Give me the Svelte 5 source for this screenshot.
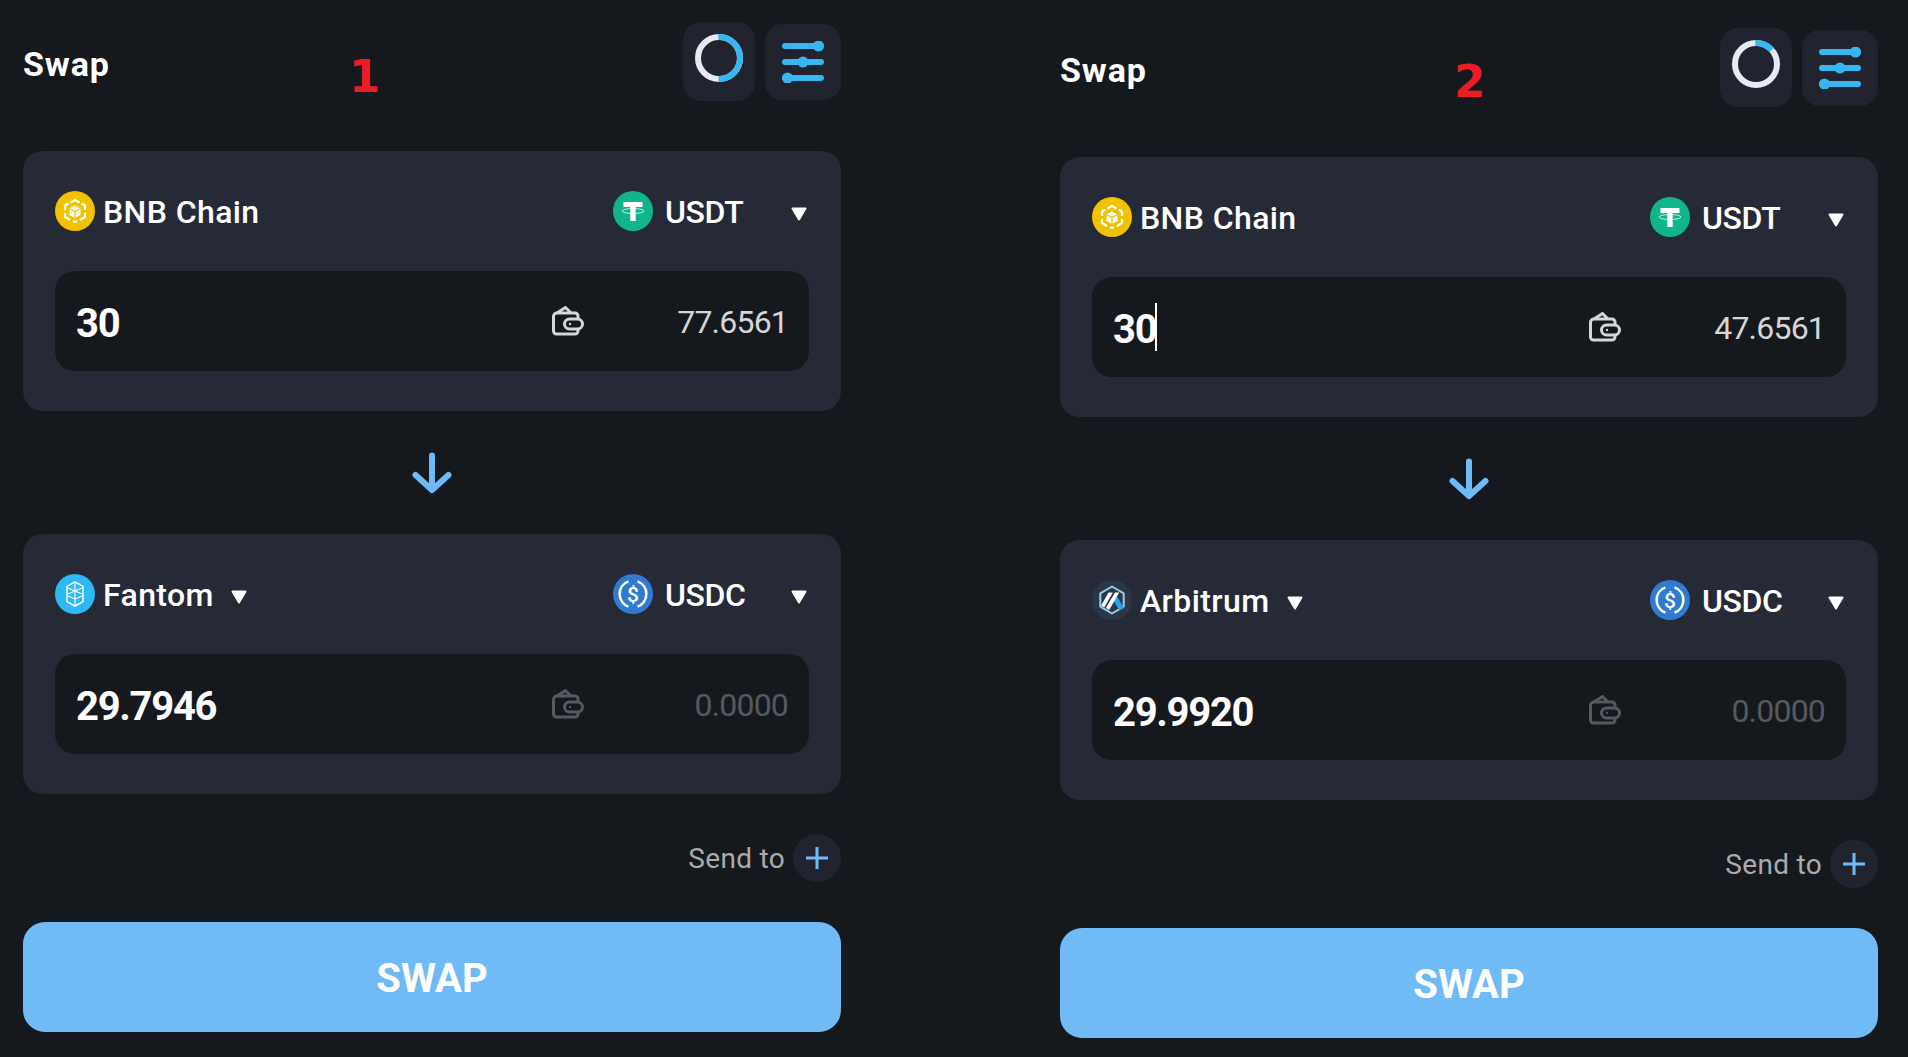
<script lang="ts">
	const panels = [
		{
			tag: '1',
			progress: 51,
			from: { value: '30', balance: '77.6561', cursor: false },
			chain: { name: 'Fantom', icon: 'fantom' },
			to: { value: '29.7946', balance: '0.0000' }
		},
		{
			tag: '2',
			progress: 14,
			from: { value: '30', balance: '47.6561', cursor: true },
			chain: { name: 'Arbitrum', icon: 'arbitrum' },
			to: { value: '29.9920', balance: '0.0000' }
		}
	];
</script>

{#snippet caret()}
	<svg class="caret" viewBox="0 0 16 14"><path d="M1.5 1.5h13L8 12.5z" fill="#fff" stroke="#fff" stroke-width="2" stroke-linejoin="round" /></svg>
{/snippet}

{#snippet logo(kind)}
	<svg class="logo" viewBox="0 0 40 40">
		{#if kind === 'bnb'}
			<circle cx="20" cy="20" r="20" fill="#f0c200" />
			<path d="M15.500 11.500L20 9l4.500 2.500M26.500 12.500l3.500 2V19M30 22v4l-5 3M22 30l-2 1-2-1M15 29l-5-3v-4M10 19v-4.500l3.500-2" fill="none" stroke="#fff" stroke-width="2.200" />
			<path d="M20 14.500l5.500 3V24L20 27l-5.500-3v-6.500z" fill="#fff" />
			<path d="M14.500 17.500l5.500 3 5.500-3M20 20.500V27" fill="none" stroke="#f0c200" stroke-width="1.300" />
		{:else if kind === 'usdt'}
			<circle cx="20" cy="20" r="20" fill="#10b68a" />
			<path d="M10.500 11h19v5h-6.800v14h-5.400V16h-6.800z" fill="#fff" />
			<ellipse cx="20" cy="20" rx="11" ry="2.500" fill="none" stroke="#fff" stroke-opacity="0.8" stroke-width="0.9" />
		{:else if kind === 'usdc'}
			<circle cx="20" cy="20" r="20" fill="#2f7bd2" />
			<path d="M15.500 7.400a13.400 13.400 0 0 0 0 25.200M24.500 7.400a13.400 13.400 0 0 1 0 25.200" fill="none" stroke="#fff" stroke-width="2.600" />
			<text x="20" y="27.500" text-anchor="middle" class="dollar">$</text>
		{:else if kind === 'fantom'}
			<circle cx="20" cy="20" r="20" fill="#2cb9f6" />
			<path d="M20 8l8 4.400v15.200L20 32l-8-4.400V12.400z" fill="none" stroke="#fff" stroke-width="1.500" stroke-linejoin="round" />
			<path d="M13 14l14 6M27 14l-14 6M20 9v22M13 22l7 3 7-3" fill="none" stroke="#fff" stroke-width="1.100" />
		{:else}
			<circle cx="20" cy="20" r="20" fill="#2b3648" />
			<path d="M20 6.500l11.700 6.800v13.400L20 33.500 8.300 26.700V13.300z" fill="#2b3648" stroke="#9ccbe8" stroke-width="2" stroke-linejoin="round" />
			<path d="M24 14.500l8 13.500-4.600 2.600-6.600-11z" fill="#28a0f0" />
			<path d="M16.500 12.500h4.300l-8.500 15-3.200-2zM23 12.500h4.200l-10 17.500-3.400-2z" fill="#fff" />
		{/if}
	</svg>
{/snippet}

{#snippet wallet()}
	<svg class="wallet" viewBox="0 0 32 30" fill="none" stroke="currentColor" stroke-width="3" stroke-linejoin="round">
		<path d="M26 12.500V10a3 3 0 0 0-3-3H5A3.500 3.500 0 0 0 1.500 10.500V25a3 3 0 0 0 3 3H23a3 3 0 0 0 3-3v-2" />
		<path d="M5 7l8.500-5.500L19 7" />
		<rect x="12.500" y="13" width="18" height="10" rx="5" />
		<circle cx="18" cy="18" r="1.200" fill="currentColor" stroke="none" />
	</svg>
{/snippet}

{#snippet amount(value, balance, empty, cursor)}
	<div class="amount">
		<div class="value">{value}{#if cursor}<span class="cursor"></span>{/if}</div>
		<div class="stock" class:empty>
			{@render wallet()}
			<span class="balance">{balance}</span>
		</div>
	</div>
{/snippet}

<main class="page">
	{#each panels as p}
		<section class="panel">
			<header class="head">
				<h1>Swap</h1>
				<span class="tag">{p.tag}</span>
				<div class="actions">
					<button class="refresh" aria-label="Refresh">
						<svg viewBox="0 0 48 48" width="48" height="48" fill="none" stroke-width="6">
							<circle cx="24" cy="24" r="21" stroke="#e6eaf3" />
							<circle cx="24" cy="24" r="21" stroke="#36b6f2" pathLength="100" stroke-dasharray="{p.progress} 100" transform="rotate(-92 24 24)" />
						</svg>
					</button>
					<button class="settings" aria-label="Settings">
						<svg viewBox="0 0 42 42" width="42" height="42" fill="#36b6f2">
							<rect y="2" width="42" height="6" rx="3" />
							<rect y="18" width="42" height="6" rx="3" />
							<rect y="34" width="42" height="6" rx="3" />
							<circle cx="36.500" cy="5" r="5.500" />
							<circle cx="21" cy="21" r="5.500" />
							<circle cx="5.500" cy="37" r="5.500" />
						</svg>
					</button>
				</div>
			</header>

			<div class="card">
				<div class="row">
					<div class="chain">
						{@render logo('bnb')}
						<span>BNB Chain</span>
					</div>
					<div class="token">
						{@render logo('usdt')}
						<span>USDT</span>
						{@render caret()}
					</div>
				</div>
				{@render amount(p.from.value, p.from.balance, false, p.from.cursor)}
			</div>

			<div class="flip">
				<svg viewBox="0 0 40 42" width="40" height="42" fill="none" stroke="#6fbbfa" stroke-width="6" stroke-linecap="round" stroke-linejoin="round">
					<path d="M20 3.500v34M3.500 23L20 38l16.500-15" />
				</svg>
			</div>

			<div class="card">
				<div class="row">
					<div class="chain">
						{@render logo(p.chain.icon)}
						<span>{p.chain.name}</span>
						{@render caret()}
					</div>
					<div class="token">
						{@render logo('usdc')}
						<span>USDC</span>
						{@render caret()}
					</div>
				</div>
				{@render amount(p.to.value, p.to.balance, true, false)}
			</div>

			<div class="send">
				<span>Send to</span>
				<button class="plus" aria-label="Add recipient">
					<svg viewBox="0 0 22 22" width="22" height="22" stroke="#6fbbfa" stroke-width="3"><path d="M11 0v22M0 11h22" /></svg>
				</button>
			</div>

			<button class="swap">SWAP</button>
		</section>
	{/each}
</main>

<style>
	:global(body) {
		background: #15191e;
	}
	.page {
		display: flex;
		gap: 219px;
		height: 1057px;
		padding-left: 23px;
		background: #15191e;
		color: #fff;
		font-family: Roboto, 'Liberation Sans', sans-serif;
		overflow: hidden;
	}
	.panel {
		position: relative;
		width: 818px;
		flex: none;
	}
	.panel:nth-child(2) {
		margin-top: 6px;
	}
	button {
		border: 0;
		padding: 0;
		font: inherit;
		color: inherit;
		display: flex;
		align-items: center;
		justify-content: center;
	}
	.head {
		display: flex;
		align-items: center;
		justify-content: space-between;
		height: 79px;
		padding-top: 22px;
		margin-bottom: 50px;
	}
	h1 {
		margin: 4px 0 0;
		font-size: 34px;
		font-weight: 700;
		letter-spacing: 0.9px;
	}
	.tag {
		position: absolute;
		left: 326px;
		top: 50px;
		color: #ed1c24;
		font: 700 45px 'DejaVu Sans', sans-serif;
	}
	.panel:nth-child(2) .tag {
		left: 394px;
		top: 49px;
	}
	.actions {
		display: flex;
		align-items: center;
		gap: 10px;
	}
	.refresh {
		width: 72px;
		height: 79px;
		padding-bottom: 7px;
		background: #21242e;
		border-radius: 18px;
	}
	.settings {
		width: 76px;
		height: 76px;
		background: #21242e;
		border-radius: 18px;
	}
	.card {
		height: 260px;
		box-sizing: border-box;
		padding: 40px 32px;
		background: #262a36;
		border-radius: 20px;
	}
	.row {
		display: flex;
		justify-content: space-between;
		height: 40px;
		margin-bottom: 40px;
		font-size: 32px;
		font-weight: 500;
		letter-spacing: 0.4px;
	}
	.row span {
		padding-top: 2px;
	}
	.chain,
	.token {
		display: flex;
		align-items: center;
	}
	.token {
		width: 196px;
		letter-spacing: -0.4px;
	}
	.token span {
		margin-left: 12px;
	}
	.token .caret {
		margin-left: auto;
		margin-right: 2px;
	}
	.chain span {
		margin-left: 8px;
	}
	.chain .caret {
		margin-left: 17px;
	}
	.logo {
		width: 40px;
		height: 40px;
		flex: none;
	}
	.dollar {
		font-size: 21px;
		font-weight: 500;
		fill: #fff;
		letter-spacing: 0;
	}
	.caret {
		width: 16px;
		height: 14px;
		flex: none;
		margin-top: 6px;
	}
	.amount {
		display: flex;
		align-items: center;
		height: 100px;
		padding: 0 21px;
		background: #15191e;
		border-radius: 20px;
	}
	.value {
		flex: 1;
		display: flex;
		align-items: center;
		padding-top: 4px;
		font-size: 40px;
		font-weight: 700;
		letter-spacing: -1.300px;
	}
	.cursor {
		width: 2px;
		height: 48px;
		margin: -4px 0 0 -1px;
		background: #fff;
	}
	.stock {
		display: flex;
		align-items: center;
		color: #d6d6d6;
	}
	.stock.empty {
		color: #565a60;
	}
	.wallet {
		width: 32px;
		height: 30px;
		flex: none;
	}
	.balance {
		width: 204px;
		padding-top: 2px;
		text-align: right;
		font-size: 32px;
		letter-spacing: -0.8px;
	}
	.flip {
		display: flex;
		align-items: center;
		justify-content: center;
		height: 123px;
	}
	.send {
		display: flex;
		align-items: center;
		justify-content: flex-end;
		gap: 8px;
		margin: 40px 0;
		color: #a9abae;
		font-size: 28px;
		letter-spacing: 0.3px;
	}
	.plus {
		width: 48px;
		height: 48px;
		background: #21242e;
		border-radius: 50%;
	}
	.swap {
		width: 100%;
		height: 110px;
		padding-top: 3px;
		background: #70bbf6;
		border-radius: 22px;
		font-size: 40px;
		font-weight: 700;
	}
</style>
